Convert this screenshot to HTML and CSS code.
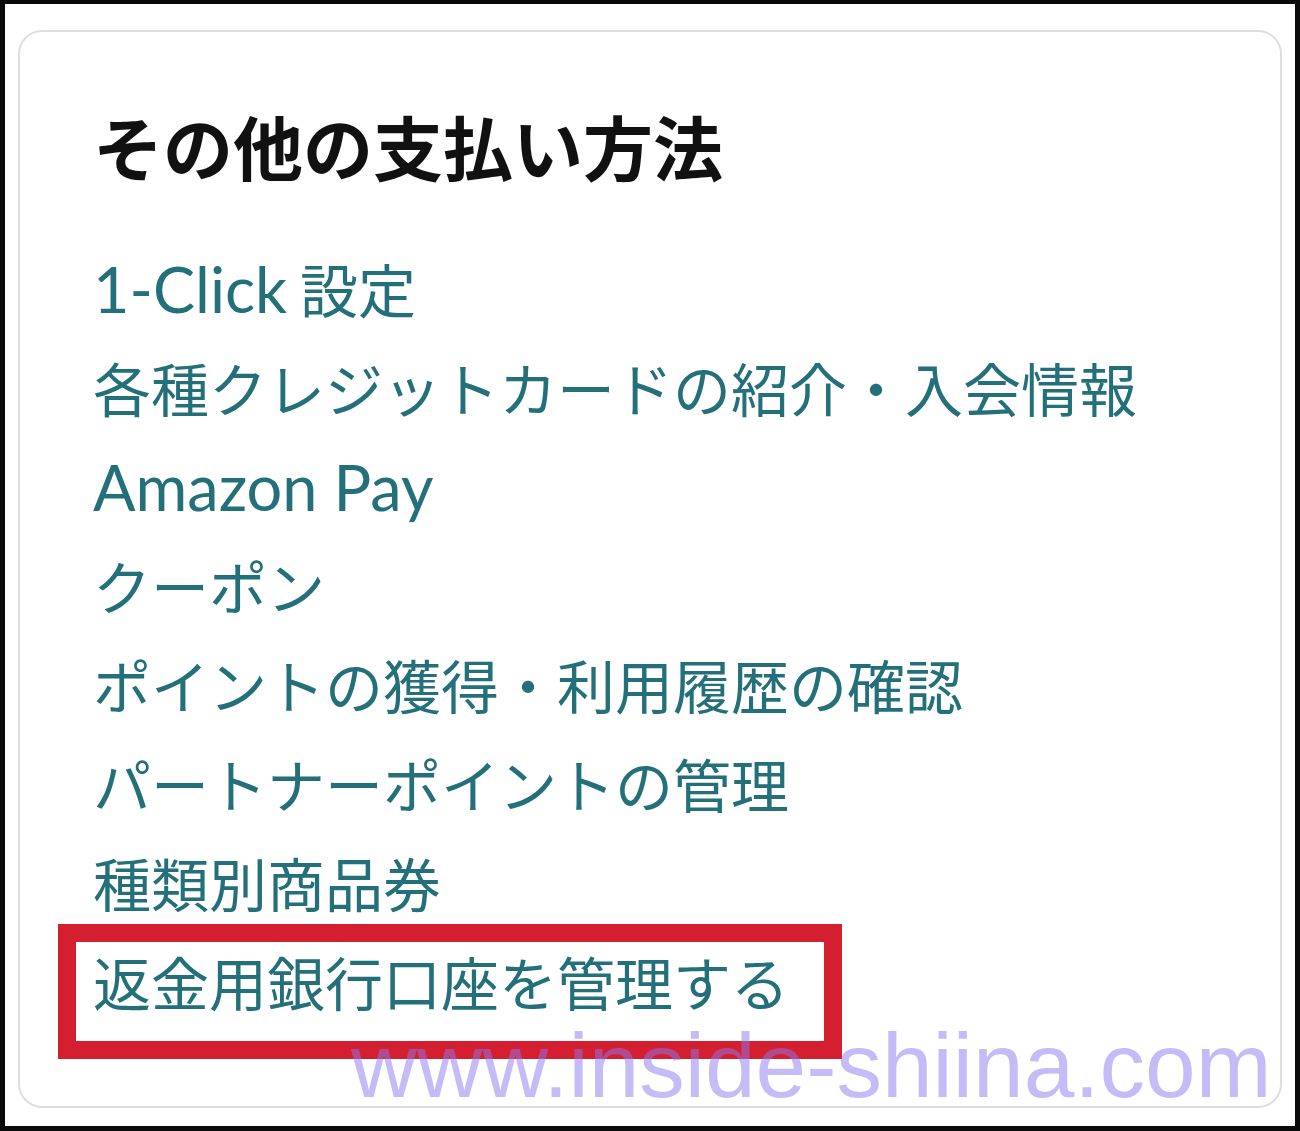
FILE: index.html
```html
<!DOCTYPE html>
<html lang="ja">
<head>
<meta charset="utf-8">
<title>その他の支払い方法</title>
<link rel="stylesheet" href="styles.css">
</head>
<body>
<div class="frame">
  <section class="card">
    <h2 class="title">その他の支払い方法</h2>
    <ul class="links">
      <li><a href="#"><span class="lat">1-Click</span> 設定</a></li>
      <li><a href="#">各種クレジットカードの紹介・入会情報</a></li>
      <li><a href="#"><span class="lat">Amazon Pay</span></a></li>
      <li><a href="#">クーポン</a></li>
      <li><a href="#">ポイントの獲得・利用履歴の確認</a></li>
      <li><a href="#">パートナーポイントの管理</a></li>
      <li><a href="#">種類別商品券</a></li>
      <li class="marked"><a href="#">返金用銀行口座を管理する</a></li>
    </ul>
  </section>
  <div class="watermark">www.inside-shiina.com</div>
</div>
</body>
</html>
```

FILE: styles.css
```css
html, body {
  margin: 0;
  padding: 0;
  background: #ffffff;
}

.frame {
  position: relative;
  width: 1300px;
  height: 1131px;
  box-sizing: border-box;
  border-style: solid;
  border-color: #0a0a0a;
  border-width: 4px 5px 5px 5px;
  padding: 26px 13px 18px 13px;
  background: #ffffff;
}

.card {
  box-sizing: border-box;
  height: 100%;
  border: 2px solid #dedede;
  border-radius: 24px;
  padding: 64px 0 0 73px;
  background: #ffffff;
}

.title {
  margin: 0;
  font-family: "Noto Sans CJK JP", "Noto Sans", sans-serif;
  font-size: 70px;
  font-weight: 700;
  line-height: 100px;
  color: #111111;
}

.links {
  list-style: none;
  margin: 43px 0 0 0;
  padding: 0;
}

.links li {
  height: 99px;
  font-family: "Noto Sans CJK JP", "Noto Sans", sans-serif;
  font-size: 58px;
  line-height: 99px;
  white-space: nowrap;
}

.links a {
  color: #23707a;
  text-decoration: none;
}

.lat {
  font-family: Lato, "Open Sans", sans-serif;
  font-size: 63px;
  line-height: 1;
}

.marked {
  position: relative;
}

.marked::after {
  content: "";
  position: absolute;
  left: -35px;
  top: -8px;
  width: 784px;
  height: 135px;
  box-sizing: border-box;
  border: 18px solid #d41f30;
}

.watermark {
  position: absolute;
  left: 346px;
  top: 1016px;
  font-family: "Liberation Sans", Arial, sans-serif;
  font-size: 91px;
  line-height: 91px;
  color: rgba(140, 120, 240, 0.5);
  white-space: nowrap;
}
```
